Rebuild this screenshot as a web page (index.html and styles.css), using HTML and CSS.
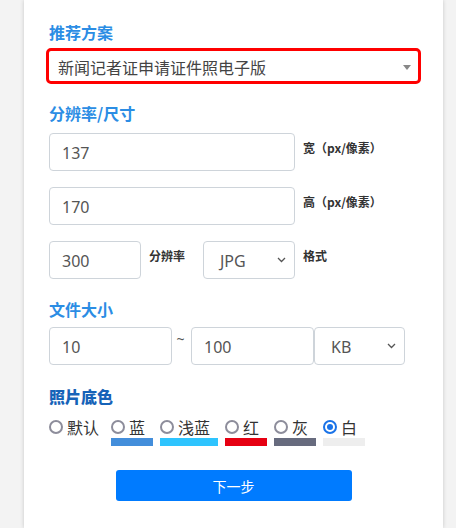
FILE: index.html
```html
<!DOCTYPE html>
<html lang="zh-CN">
<head>
<meta charset="utf-8">
<title>证件照规格</title>
<link rel="stylesheet" href="styles.css">
</head>
<body>
<div class="card">
  <h3 class="title">推荐方案</h3>
  <div class="preset">
    <span class="preset-text">新闻记者证申请证件照电子版</span>
    <span class="preset-arrow"></span>
  </div>

  <h3 class="title t-size">分辨率/尺寸</h3>
  <div class="row first">
    <input class="field w-wide" type="text" value="137">
    <span class="lbl">宽（px/像素）</span>
  </div>
  <div class="row">
    <input class="field w-wide" type="text" value="170">
    <span class="lbl">高（px/像素）</span>
  </div>
  <div class="row">
    <input class="field w-small" type="text" value="300">
    <span class="lbl lbl-dpi">分辨率</span>
    <div class="field dropdown w-small">
      <span>JPG</span>
      <svg class="chev" width="9" height="6" viewBox="0 0 9 6"><path d="M1 1l3.5 3.5L8 1" fill="none" stroke="#555" stroke-width="1.3"/></svg>
    </div>
    <span class="lbl">格式</span>
  </div>

  <h3 class="title t-file">文件大小</h3>
  <div class="row range">
    <input class="field w-min" type="text" value="10">
    <span class="tilde">~</span>
    <input class="field w-max" type="text" value="100">
    <div class="field dropdown w-unit">
      <span>KB</span>
      <svg class="chev" width="9" height="6" viewBox="0 0 9 6"><path d="M1 1l3.5 3.5L8 1" fill="none" stroke="#555" stroke-width="1.3"/></svg>
    </div>
  </div>

  <h3 class="title t-bg">照片底色</h3>
  <div class="colors">
    <label class="opt opt-first"><span class="opt-line"><input type="radio" name="bg"><span>默认</span></span></label>
    <label class="opt"><span class="opt-line"><input type="radio" name="bg"><span>蓝</span></span><span class="bar bar-blue"></span></label>
    <label class="opt"><span class="opt-line"><input type="radio" name="bg"><span>浅蓝</span></span><span class="bar bar-sky"></span></label>
    <label class="opt"><span class="opt-line"><input type="radio" name="bg"><span>红</span></span><span class="bar bar-red"></span></label>
    <label class="opt"><span class="opt-line"><input type="radio" name="bg"><span>灰</span></span><span class="bar bar-gray"></span></label>
    <label class="opt"><span class="opt-line"><input type="radio" name="bg" checked><span>白</span></span><span class="bar bar-white"></span></label>
  </div>

  <div class="actions">
    <button class="next" type="button">下一步</button>
  </div>
</div>
</body>
</html>
```

FILE: styles.css
```css
* { box-sizing: border-box; }
html, body { margin: 0; padding: 0; }
body {
  background: #f3f3f3;
  font-family: "Noto Sans", "Noto Sans CJK SC", sans-serif;
  color: #333;
  height: 528px;
  overflow: hidden;
}
.card {
  margin-left: 24px;
  width: 419px;
  min-height: 528px;
  background: #fff;
  box-shadow: 0 0 4px rgba(0, 0, 0, 0.18);
  padding: 22px 25px 0 25px;
}
.title {
  margin: 0;
  font-size: 16px;
  line-height: 20px;
  font-weight: bold;
  color: #2b8de4;
  font-family: "Noto Sans CJK SC", sans-serif;
}
.preset {
  margin-top: 9px;
  height: 30px;
  width: 369px;
  outline: 3px solid #f00;
  border-radius: 2px;
  display: flex;
  align-items: center;
  justify-content: space-between;
  padding: 0 7px 0 9px;
}
.preset-text {
  font-family: "Noto Sans CJK SC", sans-serif;
  font-size: 16px;
  color: #444;
  line-height: 20px;
  padding-top: 2px;
}
.preset-arrow {
  width: 0;
  height: 0;
  border-left: 4px solid transparent;
  border-right: 4px solid transparent;
  border-top: 5px solid #888;
  margin-top: 2px;
}
.t-size { margin-top: 22px; }
.row {
  display: flex;
  align-items: flex-start;
  margin-top: 16px;
}
.row.first { margin-top: 10px; }
.field {
  height: 38px;
  border: 1px solid #ced4da;
  border-radius: 4px;
  background: #fff;
  font-family: "Noto Sans", sans-serif;
  font-size: 16px;
  color: #555;
  padding: 0 12px;
  margin: 0;
  outline: none;
}
input.field { padding-top: 1px; }
.w-wide { width: 246px; }
.w-small { width: 92px; }
.lbl {
  margin-left: 8px;
  padding-top: 6px;
  font-size: 12px;
  line-height: 18px;
  font-weight: bold;
  color: #333;
  font-family: "Noto Sans CJK SC", sans-serif;
}
.lbl-dpi { width: 54px; flex-shrink: 0; }
.dropdown {
  display: flex;
  align-items: center;
  justify-content: space-between;
  padding: 2px 8px 0 16px;
}
.chev { display: block; margin-top: -2px; }
.t-file { margin-top: 20px; }
.range { margin-top: 8px; }
.w-min { width: 123px; }
.w-max { width: 123px; }
.w-unit { width: 91px; padding-left: 16px; }
.tilde {
  width: 19px;
  text-align: center;
  font-size: 14px;
  color: #555;
  line-height: 18px;
  padding-top: 3px;
  padding-right: 2px;
}
.t-bg {
  margin-top: 21px;
  color: #1663b8;
  font-weight: 900;
}
.colors {
  display: flex;
  align-items: flex-start;
  gap: 7px;
  margin-top: 11px;
}
.opt {
  display: flex;
  flex-direction: column;
  padding-right: 8px;
  cursor: pointer;
}
.opt-first { padding-right: 5px; }
.opt-line {
  display: flex;
  align-items: center;
  height: 20px;
  font-family: "Noto Sans CJK SC", sans-serif;
  font-size: 16px;
  color: #333;
}
.opt-line input {
  -webkit-appearance: none;
  appearance: none;
  width: 14px;
  height: 14px;
  margin: 0 4px 0 0;
  border: 2px solid #8d8d9b;
  border-radius: 50%;
  background: #fff;
  flex-shrink: 0;
  position: relative;
}
.opt-line input:checked {
  border-color: #1a73e8;
}
.opt-line input:checked::after {
  content: "";
  position: absolute;
  left: 2px;
  top: 2px;
  width: 6px;
  height: 6px;
  border-radius: 50%;
  background: #1a73e8;
}
.bar {
  display: block;
  height: 8px;
  margin-top: 1px;
  margin-right: -8px;
}
.bar-blue { background: #438edb; }
.bar-sky { background: #2ec4fe; }
.bar-red { background: #e60012; }
.bar-gray { background: #676b7e; }
.bar-white { background: #eeeeee; }
.actions {
  display: flex;
  justify-content: center;
  margin-top: 24px;
}
.next {
  width: 236px;
  height: 31px;
  background: #007bff;
  color: #fff;
  border: none;
  border-radius: 3px;
  font-size: 14px;
  font-family: "Noto Sans CJK SC", sans-serif;
  cursor: pointer;
}
```
